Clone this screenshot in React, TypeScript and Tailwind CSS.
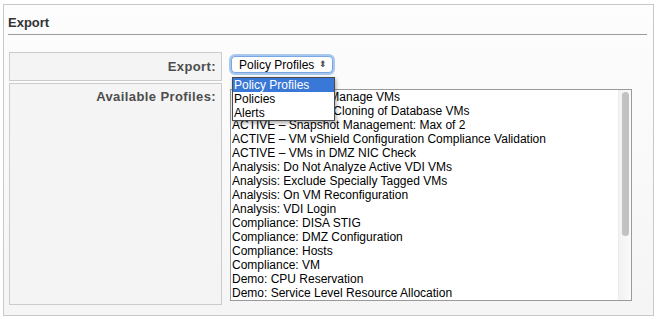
import React from "react";

const profiles = [
  "ACTIVE – Do Not Manage VMs",
  "ACTIVE – Prevent Cloning of Database VMs",
  "ACTIVE – Snapshot Management: Max of 2",
  "ACTIVE – VM vShield Configuration Compliance Validation",
  "ACTIVE – VMs in DMZ NIC Check",
  "Analysis: Do Not Analyze Active VDI VMs",
  "Analysis: Exclude Specially Tagged VMs",
  "Analysis: On VM Reconfiguration",
  "Analysis: VDI Login",
  "Compliance: DISA STIG",
  "Compliance: DMZ Configuration",
  "Compliance: Hosts",
  "Compliance: VM",
  "Demo: CPU Reservation",
  "Demo: Service Level Resource Allocation",
];

const options = ["Policy Profiles", "Policies", "Alerts"];

export default function App() {
  return (
    <div className="h-[319px] w-[656px] bg-white pl-[3px] pt-[4px] font-['Liberation_Sans',Arial,sans-serif]">
      <div className="relative h-[312px] w-[651px] border border-[#c8c8c8] bg-gradient-to-b from-[#fdfdfd] to-[#f5f5f5]">
        <div className="ml-[4px] mr-[6px] flex h-[30px] items-end border-b border-[#9c9c9c] pb-[2px] text-[13px] font-bold text-[#333]">
          Export
        </div>

        <div className="ml-[5px] mt-[17px] grid grid-cols-[213px_1fr] gap-y-[2px]">
          <div className="h-[29px] border border-[#cccccc] bg-[#f4f4f4] pr-[5px] text-right text-[13px] font-bold leading-[27px] tracking-[0.4px] text-[#4d4d4d]">
            Export:
          </div>
          <div className="pl-[9px] pt-[4px]">
            <div className="flex h-[17px] w-[102px] items-center justify-between rounded-[4px] border border-[#7aa7e0] bg-white pl-[7px] pr-[5px] text-[12px] text-black shadow-[0_0_0_2px_#a9c8f0]">
              <span>Policy Profiles</span>
              <span className="text-[9px] leading-none text-[#555]">⬍</span>
            </div>
          </div>

          <div className="h-[222px] border border-[#cccccc] bg-[#f4f4f4] pr-[5px] pt-[5px] text-right text-[13px] font-bold leading-[16px] tracking-[0.4px] text-[#4d4d4d]">
            Available Profiles:
          </div>
          <div className="pl-[8px] pt-[6px]">
            <div className="flex h-[212px] w-[402px] border border-[#9a9a9a] bg-white">
              <div className="flex-1 overflow-hidden">
                {profiles.map((p) => (
                  <div key={p} className="whitespace-nowrap pl-[1px] text-[12px] leading-[14px] text-black">
                    {p}
                  </div>
                ))}
              </div>
              <div className="w-[13px] border-l border-[#ececec] bg-gradient-to-r from-[#f2f2f2] to-[#fafafa] pl-[3px] pt-[2px]">
                <div className="h-[144px] w-[7px] rounded-full bg-[#c2c2c2]" />
              </div>
            </div>
          </div>
        </div>

        <div className="absolute left-[228px] top-[72px] w-[103px] border border-[#4a4a4a] bg-white shadow-[1px_2px_4px_rgba(0,0,0,0.35)]">
          {options.map((o, i) => (
            <div
              key={o}
              className={
                i === 0
                  ? "bg-[#3a78d8] pl-[1px] text-[12px] leading-[14px] text-white"
                  : "pl-[1px] text-[12px] leading-[14px] text-black"
              }
            >
              {o}
            </div>
          ))}
        </div>
      </div>
    </div>
  );
}
